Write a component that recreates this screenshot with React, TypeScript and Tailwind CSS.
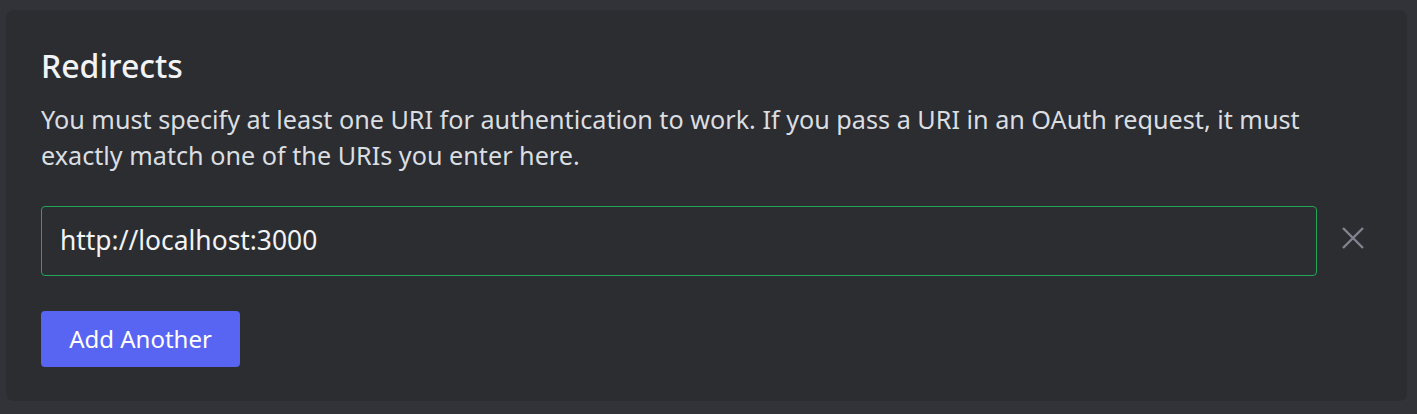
const font = { fontFamily: '"Noto Sans", "Open Sans", sans-serif' };

export default function App() {
  return (
    <div className="h-[414px] w-[1417px] bg-[#313338] px-[6px] pt-[10px]" style={font}>
      <div className="flex h-[391px] w-[1401px] flex-col rounded-[8px] bg-[#2b2d31] px-[35px] pt-[37px]">
        <h2 className="text-[32px] leading-[38px] font-medium text-[#f2f3f5]">Redirects</h2>
        <p className="mt-[16px] text-[25.2px] leading-[36px] text-[#dbdee1]">
          You must specify at least one URI for authentication to work. If you pass a URI in an OAuth request, it must
          exactly match one of the URIs you enter here.
        </p>
        <div className="mt-[33px] flex items-center">
          <div className="flex h-[70px] w-[1276px] items-center rounded-[4px] border border-[#23a55a] pl-[18px] text-[26.4px] text-[#f2f3f5]">
            http://localhost:3000
          </div>
          <button aria-label="Remove" className="mb-[6px] ml-[24px] flex h-[24px] w-[24px] items-center justify-center text-[#80848e]">
            <svg width="24" height="24" viewBox="0 0 24 24" fill="none" stroke="currentColor" strokeWidth="2.4">
              <path d="M2 2L22 22M22 2L2 22" />
            </svg>
          </button>
        </div>
        <div className="mt-[35px]">
          <button className="h-[56px] w-[199px] rounded-[4px] bg-[#5865f2] text-[24px] text-white">Add Another</button>
        </div>
      </div>
    </div>
  );
}
